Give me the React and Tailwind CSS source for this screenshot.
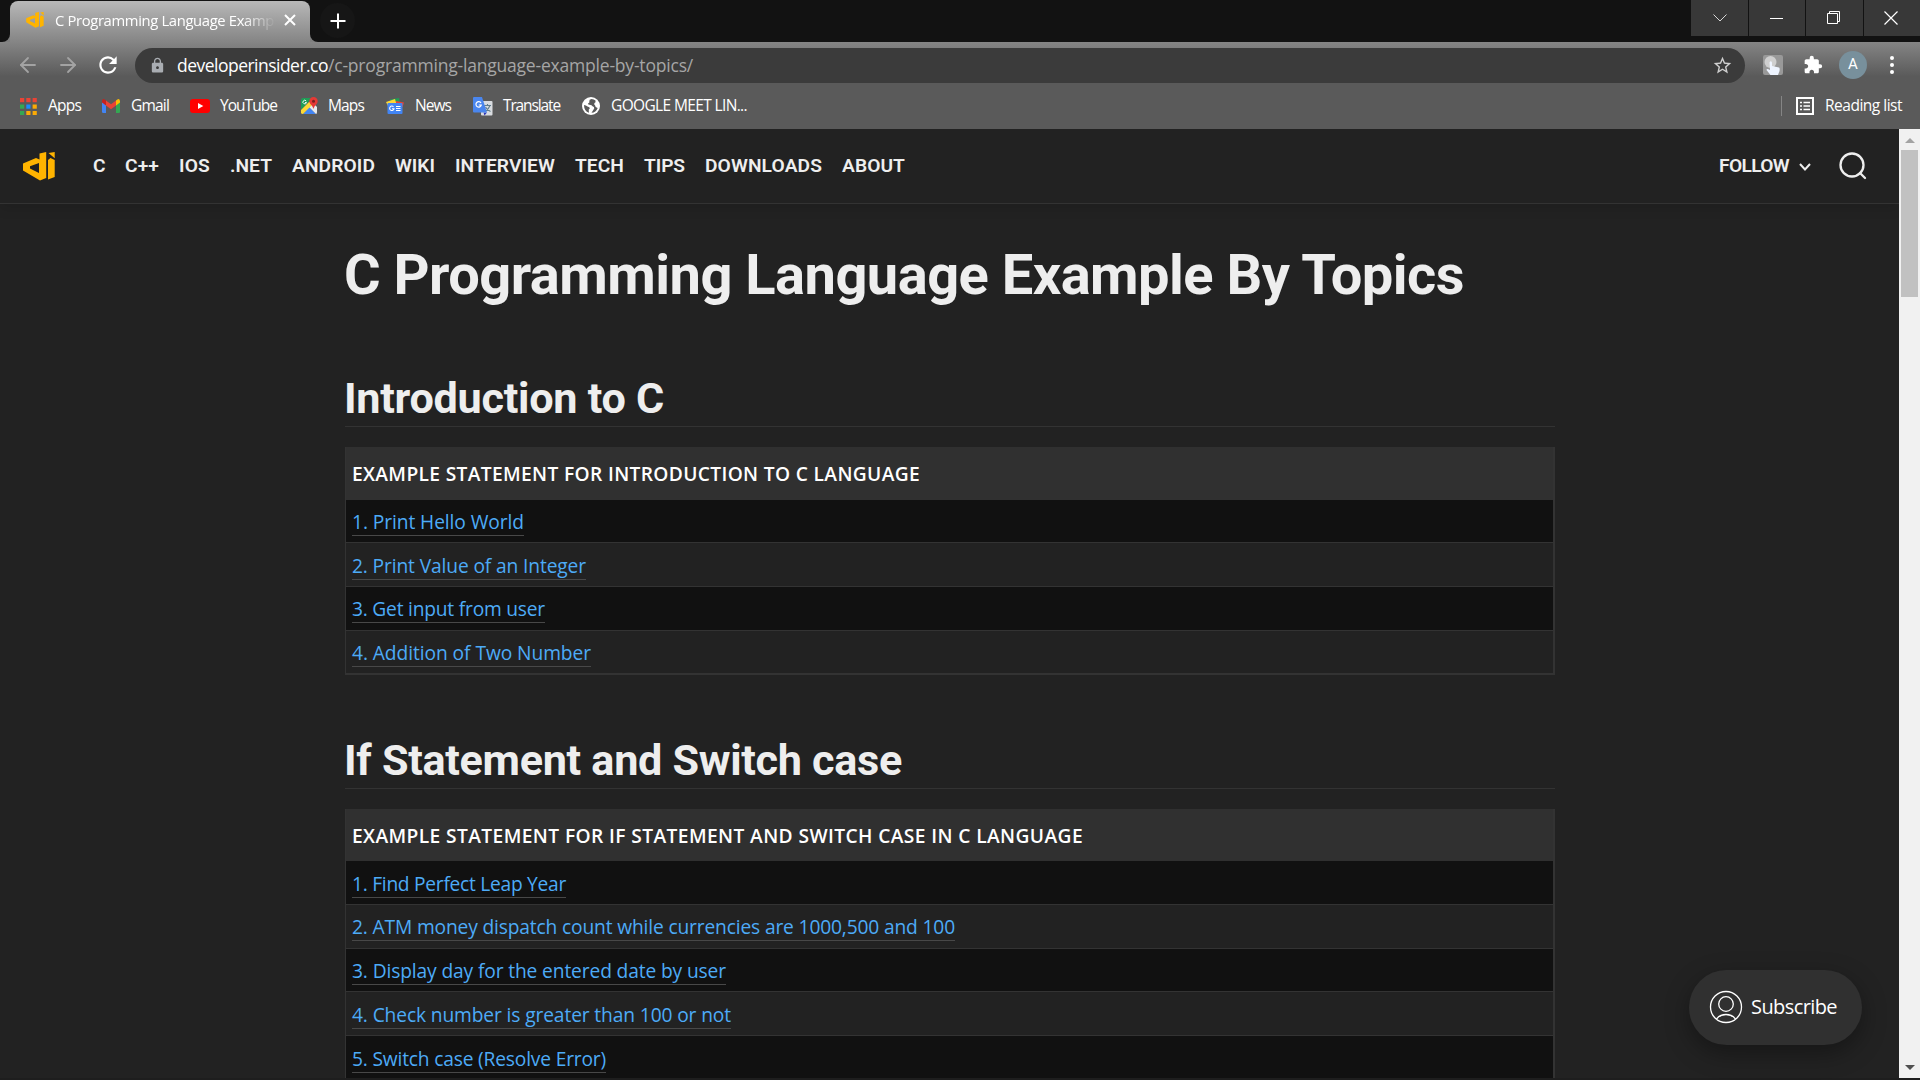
import { useLayoutEffect, useRef, useState } from "react";
import { ArrowLeft } from "lucide-react";
import { MdLock, MdStarBorder, MdExtension, MdRefresh } from "react-icons/md";

const UI = "font-['Open_Sans','Noto_Sans',sans-serif]";
const HEAD = "font-['Roboto',sans-serif]";

/* Inline text whose tracking is adjusted so that it spans a given width. */
function Fit({ w, className = "", children }) {
  const ref = useRef(null);
  const [ls, setLs] = useState(0);
  useLayoutEffect(() => {
    const natural = ref.current.getBoundingClientRect().width;
    setLs((w - natural) / ref.current.textContent.length);
  }, [w]);
  return (
    <span ref={ref} style={{ letterSpacing: ls }} className={`inline-block whitespace-nowrap ${className}`}>
      {children}
    </span>
  );
}

function Logo({ className }) {
  return (
    <svg viewBox="0 0 32 29" className={className} fill="#ffb400">
      <path fillRule="evenodd" d="M16.500 1.500 23.200 0V26L17 28.600 0 18.500V11.500L13 6 16.500 7.500ZM16 11 7 14.200V16.500L16 21Z" />
      <path d="M25 8 27.500 6 31.700 8V25L25 27.500ZM25.500 1 31.700 0V6.300Z" />
    </svg>
  );
}

function WindowButtons() {
  const cell = "flex h-9 items-center justify-center bg-[#383838]";
  return (
    <div className="ml-auto flex gap-px text-white">
      <div className={`${cell} w-[57px]`}>
        <svg width="14" height="8" fill="none" stroke="currentColor" strokeWidth="1" className="opacity-80"><path d="M.5.5 7 7 13.500.5" /></svg>
      </div>
      <div className={`${cell} w-14 pr-0.5`}><div className="h-px w-[13px] bg-white" /></div>
      <div className={`${cell} w-[57px] pr-0.5`}>
        <svg width="14" height="14" fill="none" stroke="currentColor"><path d="M.5 2.500H10.500V12.500H.5ZM2.500 2.500V.5H12.500V10.500H10.500" /></svg>
      </div>
      <div className={`${cell} w-14 pr-0.5`}>
        <svg width="14" height="14" fill="none" stroke="currentColor" strokeWidth="1.200"><path d="M.5.5 13.500 13.500M13.500.5.5 13.500" /></svg>
      </div>
    </div>
  );
}

function TabStrip() {
  return (
    <div className="flex h-[42px] bg-[#121212]">
      <div className="flex w-[10px] items-end bg-[#7f7f7f]"><div className="h-[42px] w-full rounded-br-lg bg-[#121212]" /></div>
      <div className="flex h-full w-[300px] pt-px">
        <div className="flex w-full items-center rounded-t-lg bg-linear-to-b from-[#b8b8b8] to-[#858585] pb-[3px] pl-4">
          <Logo className="h-4 w-[18px] shrink-0" />
          <div className="ml-[11px] w-[221px] mask-r-from-85% mask-r-to-100%">
            <Fit w={219} className={`${UI} -mt-0.5 text-[14.800px] leading-5 text-white`}>C Programming Language Examp</Fit>
          </div>
          <svg width="12" height="12" className="ml-[8px]" stroke="#fff" strokeWidth="2"><path d="M1 1 11 11M11 1 1 11" /></svg>
        </div>
      </div>
      <div className="w-[10px] bg-[#7f7f7f]"><div className="h-full w-full rounded-bl-lg bg-[#121212]" /></div>
      <div className="mt-[3px] flex size-[35px] items-center justify-center rounded-full bg-[#161616]">
        <svg width="16" height="16" stroke="#fff" strokeWidth="2"><path d="M8 .5V15.500M.5 8H15.500" /></svg>
      </div>
      <WindowButtons />
    </div>
  );
}

function Toolbar() {
  return (
    <div className="flex h-[46px] items-center bg-linear-to-b from-[#858585] to-[#5a5a5a] to-75% pb-px">
      <ArrowLeft className="ml-4 size-6 text-[#a3a3a3]" strokeWidth={1.8} />
      <ArrowLeft className="ml-4 size-6 rotate-180 text-[#a3a3a3]" strokeWidth={1.8} />
      <MdRefresh className="ml-[15px] size-[26px] text-white" />
      <div className="ml-[14px] mt-px flex h-[35px] w-[1610px] items-center rounded-full bg-[#3b3b3b] pl-[14px] pr-3">
        <MdLock className="size-[17px] text-[#a9adb2]" />
        <div className={`${UI} ml-[11px] whitespace-nowrap text-[17.500px] leading-6 text-[#a6a6a6]`}>
          <Fit w={151} className="text-white">developerinsider.co</Fit>
          <Fit w={365}>/c-programming-language-example-by-topics/</Fit>
        </div>
        <MdStarBorder className="ml-auto size-[21px] text-[#cfcfcf]" />
      </div>
      <svg width="20" height="20" viewBox="0 0 20 20" className="ml-[18px]">
        <rect width="20" height="20" rx="2" fill="#999" />
        <circle cx="7.500" cy="7" r="6" fill="#cfcfcf" />
        <path d="M6.500 7.500Q7.800 5 9 7.500V11L16 12.500Q17 13 16.500 16L15 20H7.500L3.500 15Q3.500 13 7 15Z" fill="#eef4ff" />
      </svg>
      <MdExtension className="ml-5 size-5 text-white" />
      <div className="ml-4 flex size-7 items-center justify-center rounded-full bg-[#78909c] font-['Roboto',sans-serif] text-[15px] text-white">A</div>
      <div className="ml-[23px] flex flex-col gap-[3px]">
        <div className="size-1 rounded-full bg-white" /><div className="size-1 rounded-full bg-white" /><div className="size-1 rounded-full bg-white" />
      </div>
    </div>
  );
}

const AppsIcon = (
  <svg width="17" height="17" viewBox="0 0 17 17">
    {["#ea4335", "#ea4335", "#ea4335", "#34a853", "#1a8cff", "#fbaa05", "#34a853", "#fbaa05", "#fbaa05"].map((c, i) => (
      <rect key={i} x={(i % 3) * 6.3} y={Math.floor(i / 3) * 6.5} width="4.200" height="4.200" fill={c} />
    ))}
  </svg>
);
const GmailIcon = (
  <svg width="18" height="14" viewBox="0 0 18 14">
    <path d="M0 2V12.700Q0 14 1.300 14H4V6Z" fill="#4285f4" />
    <path d="M18 2V12.700Q18 14 16.700 14H14V6Z" fill="#34a853" />
    <path d="M4 1.500 9 5.300 14 1.500V6.500L9 10.300 4 6.500Z" fill="#ea4335" />
    <path d="M0 2Q.5-1 3 .7L4 1.500V6.500L0 3.500Z" fill="#c5221f" />
    <path d="M18 2Q17.500-1 15 .7L14 1.500V6.500L18 3.500Z" fill="#fbbc04" />
  </svg>
);
const YouTubeIcon = (
  <svg width="20" height="14" viewBox="0 0 20 14"><rect width="20" height="14" rx="3" fill="#f00" /><path d="M8 4 13.300 7 8 10Z" fill="#fff" /></svg>
);
const MapsIcon = (
  <svg width="18" height="18" viewBox="0 0 18 18">
    <path d="M1 3Q1 1 3 1H12L1 13Z" fill="#1e9d56" />
    <path d="M3 17 9 10 16 17Z" fill="#4285f4" />
    <path d="M9 10 13 6 17 10V15Q17 17 16 17Z" fill="#e8eaed" />
    <path d="M1 13 9.500 4.500 12 8 3 17Q1 17 1 15.500Z" fill="#fdd835" />
    <path d="M13.500 0A4.200 4.200 0 0 1 17.700 4.200C17.700 7 14.500 8 13.500 12 12.500 8 9.300 7 9.300 4.200A4.200 4.200 0 0 1 13.500 0Z" fill="#e53935" />
    <circle cx="13.500" cy="4.200" r="1.500" fill="#7b1f1c" />
    <path d="M6.200 4A1.800 1.800 0 1 0 6.500 5.500H5" fill="none" stroke="#fff" strokeWidth=".9" />
  </svg>
);
const NewsIcon = (
  <svg width="18" height="16" viewBox="0 0 18 16">
    <path d="M4 1.500 13 0 14 6H5Z" fill="#1e9d56" />
    <path d="M0 4 9 1 11 8H2Z" fill="#fdd835" />
    <path d="M10 3 18 4.500 16.500 9H10Z" fill="#ea4335" />
    <rect x="1.500" y="5" width="15" height="11" rx="1" fill="#4285f4" />
    <path d="M7.500 8.800A2.200 2.200 0 1 0 8 10.800H6M10 8.500H14.500M10 10.500H14.500M10 12.500H14.500" fill="none" stroke="#fff" strokeWidth="1.100" />
  </svg>
);
const TranslateIcon = (
  <svg width="20" height="19" viewBox="0 0 20 19">
    <rect x="8" y="4" width="11.500" height="14.500" rx="1" fill="#d9dce0" />
    <path d="M11 8.500H18M14.500 7V8.500M17 8.500Q15.500 12.500 12 14.500M12.500 10Q14 13 17.500 14.500" fill="none" stroke="#607d8b" strokeWidth="1.100" />
    <path d="M10.500 15.500H14L11.500 18.500Z" fill="#3038b5" />
    <path d="M1 0H9L14 15.500H1Q0 15.500 0 14.500V1Q0 0 1 0Z" fill="#4a86ee" />
    <path d="M8 6A2.700 2.700 0 1 0 8.300 8H5.800" fill="none" stroke="#fff" strokeWidth="1.200" />
  </svg>
);
const GlobeIcon = (
  <svg width="18" height="18" viewBox="0 0 18 18">
    <circle cx="9" cy="9" r="9" fill="#fff" />
    <path d="M9.500 2Q7 2.500 7.300 4.200 8 5.500 6.300 6.300 5.200 7 7 7.700 10 7.500 10.500 9.300 12.500 9.500 12.200 11.500 11 13.500 9.500 15.800 14 15.500 15.700 11 13 10.500 13 8.300 11.500 7.500 12.500 6 14 5.500 13.500 3.500 12 2.200 9.500 2Z" fill="#5a5a5a" />
    <path d="M2 8Q4 8.300 5.500 9.500 8 9.800 7.800 11.500 6.300 12.300 6.800 14L7 15.800Q2 14 2 8Z" fill="#5a5a5a" />
  </svg>
);

const BOOKMARKS = [
  { label: "Apps", icon: AppsIcon, gap: "gap-[11px]", w: 33, box: "w-[82px]" },
  { label: "Gmail", icon: GmailIcon, gap: "gap-[11px]", w: 38, box: "w-[88px]" },
  { label: "YouTube", icon: YouTubeIcon, gap: "gap-[10px]", w: 57, box: "w-[110px]" },
  { label: "Maps", icon: MapsIcon, gap: "gap-[10px]", w: 36, box: "w-[86px]" },
  { label: "News", icon: NewsIcon, gap: "gap-[11px]", w: 36, box: "w-[87px]" },
  { label: "Translate", icon: TranslateIcon, gap: "gap-[10px]", w: 57, box: "w-[109px]" },
  { label: "GOOGLE MEET LIN...", icon: GlobeIcon, gap: "gap-[11px]", w: 136, box: "w-[170px]" },
];

function BookmarksBar() {
  return (
    <div className={`${UI} flex h-[41px] items-center bg-[#5a5a5a] pb-[5px] pl-5 pr-[18px] text-[15.500px] leading-5 text-white`}>
      {BOOKMARKS.map((b) => (
        <div key={b.label} className={`flex items-center ${b.gap} ${b.box}`}>
          {b.icon}
          <Fit w={b.w} className="-mt-0.5">{b.label}</Fit>
        </div>
      ))}
      <div className="ml-auto mr-[14px] h-5 w-px bg-[#858585]" />
      <svg width="18" height="18" viewBox="0 0 18 18" fill="none" stroke="#fff">
        <rect x="1" y="1" width="16" height="16" strokeWidth="2" />
        <path d="M4 5.500H6M4 9H6M4 12.500H6M7.500 5.500H14M7.500 9H14M7.500 12.500H14" strokeWidth="1.600" />
      </svg>
      <Fit w={77} className="-mt-[3px] ml-[11px]">Reading list</Fit>
    </div>
  );
}

const NAV = [
  ["C", 12], ["C++", 34], ["IOS", 31], [".NET", 42], ["ANDROID", 83], ["WIKI", 40],
  ["INTERVIEW", 100], ["TECH", 49], ["TIPS", 41], ["DOWNLOADS", 117], ["ABOUT", 63],
];

function SiteHeader() {
  return (
    <header className={`${HEAD} flex h-[75px] shrink-0 items-center border-b border-[#333] pl-[23px] text-[19.200px] font-semibold leading-6 text-[#eee] shadow-[0_4px_12px_rgba(0,0,0,.12)]`}>
      <Logo className="h-[29px] w-8" />
      <nav className="-mt-px ml-[38px] flex gap-5">
        {NAV.map(([t, w]) => <Fit key={t} w={w}>{t}</Fit>)}
      </nav>
      <div className="ml-auto mr-[32px] flex items-center">
        <Fit w={70}>FOLLOW</Fit>
        <svg width="12" height="8" className="ml-2.5 mt-0.5" fill="none" stroke="#eee" strokeWidth="2"><path d="M1 1 6 6.500 11 1" /></svg>
        <svg width="28" height="28" className="ml-[28px]" fill="none" stroke="#eee" strokeWidth="2.300" strokeLinecap="round"><circle cx="13" cy="13" r="11.500" /><path d="M21 21 26 26" /></svg>
      </div>
    </header>
  );
}

function Section({ title, tw, head, hw, rows, closed }) {
  return (
    <section>
      <h2 className={`${HEAD} h-[58px] border-b border-[#333] text-[43.200px] font-bold leading-[60px] text-[#eee]`}><Fit w={tw} className="-ml-px">{title}</Fit></h2>
      <div className={`${UI} mt-5 border-l border-r-2 border-[#333] text-[19.200px]`}>
        <div className="h-[52.500px] bg-[#303030] pl-1.5 font-semibold leading-[53px] text-white"><Fit w={hw}>{head}</Fit></div>
        {rows.map(([t, w]) => (
          <div key={t} className="h-[43.700px] border-b border-[#333] pl-1.5 pt-[8.500px] odd:bg-[#222] even:bg-[#111]">
            <Fit w={w} className="h-[26px] border-b border-[#484848] leading-[24px] text-[#4dabf7]">{t}</Fit>
          </div>
        ))}
        {closed && <div className="h-px bg-[#333]" />}
      </div>
    </section>
  );
}

function Scrollbar() {
  return (
    <div className="flex w-[21px] flex-col items-center bg-[#f1f1f1]">
      <svg width="10" height="5" className="mt-[9px] shrink-0" fill="#a3a3a3"><path d="M5 0 10 5H0Z" /></svg>
      <div className="mt-[7px] h-[147px] w-[17px] shrink-0 bg-[#c1c1c1]" />
      <svg width="10" height="5" className="mb-2 mt-auto shrink-0" fill="#505050"><path d="M0 0H10L5 5Z" /></svg>
    </div>
  );
}

export default function App() {
  return (
    <div className="relative flex h-[1080px] w-[1920px] flex-col overflow-hidden bg-[#1e1e1e]">
      <TabStrip />
      <Toolbar />
      <BookmarksBar />
      <div className="flex h-[949px] overflow-hidden">
        <div className="flex w-[1899px] flex-col overflow-hidden bg-[#222]">
          <SiteHeader />
          <main className="w-[1555px] pl-[345px] pt-[38px]">
            <h1 className={`${HEAD} h-[127px] whitespace-nowrap text-[56px] font-bold leading-[67px] text-[#eee]`}><Fit w={1120} className="-ml-px">C Programming Language Example By Topics</Fit></h1>
            <Section
              title="Introduction to C" tw={320} closed
              head="EXAMPLE STATEMENT FOR INTRODUCTION TO C LANGUAGE" hw={568}
              rows={[["1. Print Hello World", 172], ["2. Print Value of an Integer", 234], ["3. Get input from user", 193], ["4. Addition of Two Number", 239]]}
            />
            <div className="h-[55.500px]" />
            <Section
              title="If Statement and Switch case" tw={558}
              head="EXAMPLE STATEMENT FOR IF STATEMENT AND SWITCH CASE IN C LANGUAGE" hw={731}
              rows={[["1. Find Perfect Leap Year", 214], ["2. ATM money dispatch count while currencies are 1000,500 and 100", 603], ["3. Display day for the entered date by user", 374], ["4. Check number is greater than 100 or not", 379], ["5. Switch case (Resolve Error)", 254]]}
            />
          </main>
        </div>
        <Scrollbar />
      </div>
      <button className={`${UI} absolute left-[1689px] top-[970px] flex h-[75px] w-[173px] items-center rounded-full bg-[#303030] pl-5 text-[20px] text-white shadow-[0_8px_24px_rgba(0,0,0,.35)]`}>
        <svg width="34" height="34" viewBox="0 0 34 34" className="-mt-px" fill="none" stroke="#fff" strokeWidth="1.300">
          <circle cx="17" cy="17" r="15.500" /><circle cx="17" cy="14" r="7.300" /><path d="M7.500 29Q11 24.500 17 24.500T26.500 29" />
        </svg>
        <Fit w={86} className="-mt-0.5 ml-2">Subscribe</Fit>
      </button>
    </div>
  );
}
